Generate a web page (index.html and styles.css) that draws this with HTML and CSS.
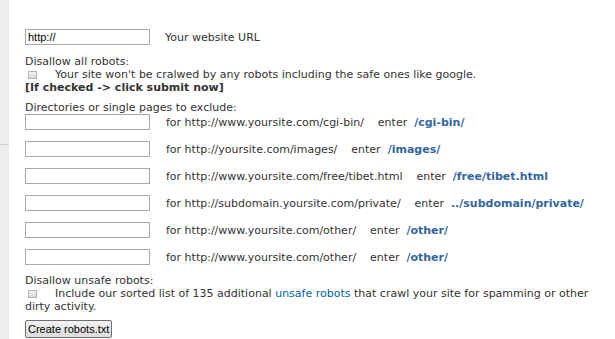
FILE: index.html
```html
<!DOCTYPE html>
<html lang="en">
<head>
  <meta charset="UTF-8">
  <title>Robots.txt generator</title>
  <link rel="stylesheet" href="styles.css">
</head>
<body>
  <div class="page">
    <!-- barra lateral cinza -->
    <div class="side"><div class="side-line"></div></div>

    <form class="main">
      <div class="row url-row">
        <input class="field" type="text" value="http://">
        <span class="label">Your website URL</span>
      </div>

      <div class="block">
        <div class="line">Disallow all robots:</div>
        <div class="line check-line"><input class="check" type="checkbox"><span>Your site won't be cralwed by any robots including the safe ones like google.</span></div>
        <div class="line"><b>[If checked -&gt; click submit now]</b></div>
      </div>

      <div class="block">
        <div class="line">Directories or single pages to exclude:</div>
        <div class="row"><input class="field" type="text"><span class="label">for http://www.yoursite.com/cgi-bin/&nbsp;&nbsp;&nbsp; enter&nbsp; <a class="path">/cgi-bin/</a></span></div>
        <div class="row"><input class="field" type="text"><span class="label">for http://yoursite.com/images/&nbsp;&nbsp;&nbsp; enter&nbsp; <a class="path">/images/</a></span></div>
        <div class="row"><input class="field" type="text"><span class="label">for http://www.yoursite.com/free/tibet.html&nbsp;&nbsp;&nbsp; enter&nbsp; <a class="path">/free/tibet.html</a></span></div>
        <div class="row"><input class="field" type="text"><span class="label">for http://subdomain.yoursite.com/private/&nbsp;&nbsp;&nbsp; enter&nbsp; <a class="path">../subdomain/private/</a></span></div>
        <div class="row"><input class="field" type="text"><span class="label">for http://www.yoursite.com/other/&nbsp;&nbsp;&nbsp; enter&nbsp; <a class="path">/other/</a></span></div>
        <div class="row"><input class="field" type="text"><span class="label">for http://www.yoursite.com/other/&nbsp;&nbsp;&nbsp; enter&nbsp; <a class="path">/other/</a></span></div>
      </div>

      <div class="block">
        <div class="line">Disallow unsafe robots:</div>
        <div class="line check-line"><input class="check" type="checkbox"><span>Include our sorted list of 135 additional <a class="link">unsafe robots</a> that crawl your site for spamming or other</span></div>
        <div class="line">dirty activity.</div>
      </div>

      <button class="submit" type="button">Create robots.txt</button>
    </form>
  </div>
</body>
</html>
```

FILE: styles.css
```css
* {
  margin: 0;
  padding: 0;
  box-sizing: border-box;
}

body {
  font-family: "DejaVu Sans", Verdana, sans-serif;
  font-size: 11px;
  color: #333333;
  background-color: #ffffff;
}

.page {
  display: flex;
  min-height: 339px;
}

/* barra lateral */
.side {
  width: 9px;
  background-color: #eeeeee;
  padding-top: 144px;
}

.side-line {
  height: 1px;
  background-color: #cccccc;
}

.main {
  padding: 29px 0 0 16px;
}

.row {
  display: flex;
  align-items: center;
  height: 16px;
  margin-bottom: 11px;
}

.url-row {
  margin-bottom: 10px;
}

.field {
  width: 125px;
  height: 16px;
  border: 1px solid #a9a9a9;
  font-family: "Liberation Sans", Arial, sans-serif;
  font-size: 11px;
  color: #000;
  padding: 0 2px;
}

.label {
  margin-left: 16px;
  white-space: nowrap;
}

.url-row .label {
  margin-left: 15px;
}

.line {
  line-height: 13px;
  white-space: nowrap;
}

.check-line {
  display: flex;
  align-items: center;
}

.check {
  appearance: none;
  width: 9px;
  height: 8px;
  margin: 0 18px 0 3px;
  border: 1px solid #b5b5b5;
  background: linear-gradient(#f4f4f4, #d8d8d8);
}

.block {
  margin-bottom: 7px;
}

.block .row:last-child {
  margin-bottom: 9px;
}

.path {
  color: #336699;
  font-weight: bold;
}

.link {
  color: #006699;
}

.submit {
  height: 18px;
  padding: 0 2px;
  font-family: "Liberation Sans", Arial, sans-serif;
  font-size: 11px;
  color: #000;
  border: 1px solid #707070;
  border-radius: 2px;
  background: linear-gradient(#f2f2f2, #dcdcdc);
}
```
